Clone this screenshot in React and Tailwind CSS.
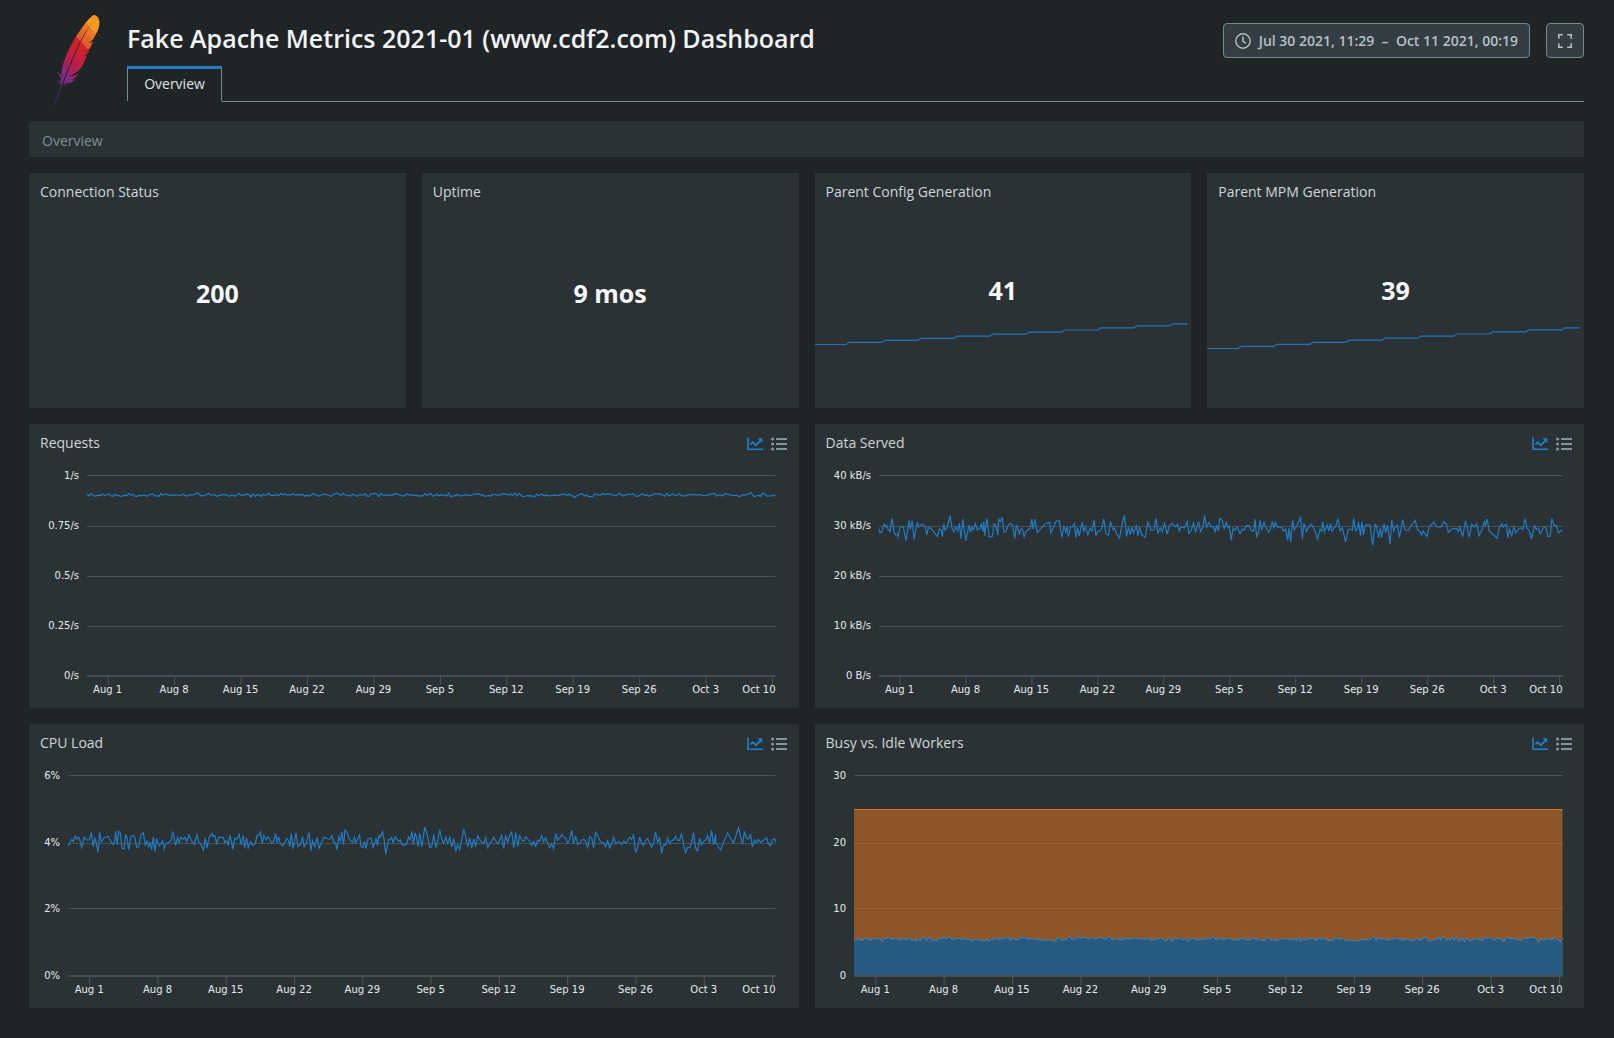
import React from "react";
import { SiApache } from "react-icons/si";

const DATA_SERVED = "12,72 15,83 19,83 28,57 32,66 36,62 40,75 45,80 51,40 57,80 62,90 66,88 69,97 75,66 85,66 93,108 102,47 106,72 112,47 117,103 127,52 131,66 141,57 150,64 155,90 160,68 168,70 187,95 193,72 198,74 202,95 206,58 210,76 217,66 225,32 231,70 236,80 242,66 248,78 253,55 258,101 263,43 272,107 282,60 286,82 290,66 295,75 301,56 307,75 315,70 319,55 323,80 326,50 329,92 335,40 343,97 352,94 357,57 362,60 368,90 371,42 376,50 381,37 387,82 392,80 400,60 407,55 412,60 419,100 424,60 433,86 437,72 442,72 447,96 452,80 465,70 470,42 474,72 480,42 486,83 498,70 510,56 524,52 527,84 534,70 543,48 552,46 560,98 566,62 572,82 576,66 580,95 586,66 592,66 598,56 602,97 607,68 612,93 621,52 626,80 631,65 638,90 645,70 650,78 657,46 662,93 668,78 676,78 680,68 686,42 692,86 700,90 706,50 714,75 718,70 724,86 733,100 740,62 748,30 754,95 760,66 765,90 770,66 775,84 783,62 788,92 793,68 800,90 810,97 818,52 822,60 828,76 836,75 842,40 848,86 855,68 861,80 868,55 876,88 882,62 890,55 900,65 907,58 912,78 918,66 928,68 936,50 941,86 948,76 955,54 961,82 970,50 976,80 983,66 988,32 994,66 1002,52 1007,66 1014,64 1020,80 1024,60 1029,78 1034,40 1041,47 1047,70 1053,52 1058,68 1062,65 1068,106 1073,70 1078,76 1086,66 1094,86 1101,72 1107,76 1113,62 1121,62 1127,76 1135,79 1139,43 1144,95 1149,85 1154,46 1159,76 1166,52 1174,72 1181,82 1186,70 1191,52 1196,68 1200,52 1207,66 1219,68 1225,78 1231,72 1237,106 1241,70 1246,112 1252,46 1257,74 1265,60 1276,38 1281,101 1286,55 1293,80 1299,68 1309,58 1319,78 1327,103 1334,72 1339,78 1342,50 1347,80 1355,60 1361,78 1365,55 1370,80 1377,66 1381,66 1388,40 1394,78 1401,68 1411,111 1419,72 1425,72 1431,76 1435,40 1441,78 1447,70 1450,50 1455,92 1460,50 1464,90 1469,62 1477,58 1484,60 1492,121 1499,58 1503,62 1510,98 1515,70 1519,98 1526,56 1531,84 1536,60 1544,117 1549,46 1555,78 1560,66 1566,60 1572,98 1582,44 1589,75 1599,76 1609,60 1619,46 1627,75 1633,78 1639,90 1643,78 1655,95 1661,66 1675,52 1685,66 1697,66 1705,50 1713,56 1719,82 1729,72 1743,70 1749,80 1753,66 1762,95 1770,48 1775,66 1781,98 1789,58 1797,66 1804,56 1811,92 1819,76 1827,50 1830,60 1835,42 1841,78 1855,90 1865,100 1872,66 1879,56 1882,66 1888,60 1893,58 1897,98 1902,74 1909,92 1915,66 1921,84 1929,72 1937,68 1942,74 1949,40 1955,72 1961,76 1968,102 1977,62 1983,74 1989,70 1994,86 2000,76 2006,66 2012,70 2017,94 2024,94 2029,40 2035,60 2043,62 2049,84 2060,75";

const CPU_LOAD = "144,378 155,358 160,365 166,349 170,358 176,352 180,362 185,382 193,352 200,360 208,360 214,338 220,380 224,355 229,368 234,397 239,335 244,366 252,354 264,349 270,360 279,374 283,370 287,334 292,374 296,334 301,338 306,384 312,387 317,346 321,352 326,390 332,352 340,346 345,354 350,382 356,380 362,346 370,338 376,375 381,363 386,380 390,366 395,390 400,352 405,394 410,356 414,368 418,378 424,370 428,362 433,387 438,372 446,366 454,362 458,335 462,350 467,376 473,352 478,368 483,352 490,358 496,352 500,365 507,344 514,360 523,374 531,344 536,364 542,372 551,390 556,354 561,384 568,352 576,340 580,350 585,346 590,370 596,352 610,352 615,368 620,362 625,374 630,346 635,366 639,388 645,354 650,358 658,343 664,374 670,346 674,384 680,354 685,384 692,365 698,376 706,372 712,345 717,347 722,335 727,372 732,346 739,360 745,350 756,370 762,362 767,340 772,368 776,350 781,370 789,378 800,356 805,360 810,380 814,340 820,386 829,338 834,380 842,374 848,350 853,380 858,372 868,338 873,392 878,362 885,380 892,352 898,385 906,365 912,352 924,357 930,358 936,346 942,366 948,370 951,390 957,350 962,362 966,335 971,374 976,330 982,338 990,360 998,368 1004,352 1008,368 1019,345 1024,380 1030,382 1034,364 1039,386 1044,358 1054,355 1060,382 1066,366 1069,354 1073,376 1078,346 1082,352 1088,335 1093,358 1098,403 1106,358 1110,360 1116,352 1120,368 1127,350 1136,364 1142,360 1148,376 1160,374 1166,352 1171,360 1176,334 1181,374 1186,338 1190,352 1195,380 1200,340";

function scale(points, originX, offsetY) {
  return points.split(" ").map((pair) => {
    const [x, y] = pair.split(",").map(Number);
    return [(x - originX) / 3, y / 3 + offsetY];
  });
}

function noise(seed, from, to, mean, amplitude) {
  let state = seed;
  const random = () => {
    state = (state * 16807) % 2147483647;
    return state / 2147483647;
  };
  const points = [];
  for (let x = from; x <= to; x += 2) {
    points.push([x, mean + (random() + random() + random() - 1.5) * amplitude]);
  }
  points.push([to, mean]);
  return points;
}

const toPath = (points) =>
  "M" + points.map(([x, y]) => `${x.toFixed(1)} ${y.toFixed(1)}`).join("L");

const requests = toPath(noise(71, 0, 689, 20, 1.9));
const dataServed = toPath(scale(DATA_SERVED, 12, 30));
const cpuLoad = toPath([
  ...scale(CPU_LOAD, 144, -55),
  [354, 72],
  [357, 52],
  ...noise(913, 360, 648, 67, 10),
  [653, 75],
  [660, 58],
  [666, 68],
  [671, 53],
  [675, 69],
  ...noise(457, 677, 708, 67, 10),
]);
const busy = toPath(noise(333, 0, 708, 164, 2.6));

const DATES = ["Aug 1", "Aug 8", "Aug 15", "Aug 22", "Aug 29", "Sep 5", "Sep 12", "Sep 19", "Sep 26", "Oct 3"];
const AXIS_TEXT = "fill-[#e6eaeb] font-['DejaVu_Sans',sans-serif] text-[10px]";

function Chart({ label, className, ticks, width, line, area }) {
  return (
    <div className={className}>
      <svg role="img" aria-label={label} className="block h-[233px] w-full overflow-visible">
        {ticks.map(([text, y], i) => (
          <g key={text}>
            <text x="-8" y={Math.round((i * 200) / (ticks.length - 1)) + 4} textAnchor="end" className={AXIS_TEXT}>
              {text}
            </text>
            <rect x="0" y={y} width="100%" height="1" fill="#455354" />
          </g>
        ))}
        {DATES.map((date, i) => (
          <g key={date}>
            <rect x={`${3 + i * 9.65}%`} y="201" width="1" height="9" fill="#4c5a5c" />
            <text x={`${3 + i * 9.65}%`} y="218" textAnchor="middle" className={AXIS_TEXT}>
              {date}
            </text>
          </g>
        ))}
        <rect x="99.5%" y="201" width="1" height="9" fill="#4c5a5c" />
        <text x="100%" y="218" textAnchor="end" className={AXIS_TEXT}>
          Oct 10
        </text>
        {area && (
          <>
            <rect x="0" y="34" width="100%" height="167" fill="#f37720" fillOpacity="0.5" />
            <rect x="0" y="34" width="100%" height="1" fill="#d5752c" />
          </>
        )}
        <svg width="100%" height="201" viewBox={`0 0 ${width} 201`} preserveAspectRatio="none" className="overflow-visible">
          {area && <path d={`${line}V201H0Z`} fill="#265a80" />}
          <path d={line} fill="none" stroke={area ? "#4d7796" : "#237cc3"} strokeWidth="1.2" vectorEffect="non-scaling-stroke" />
        </svg>
        <rect x="0" y="200" width="100%" height="2" fill="#405052" />
      </svg>
    </div>
  );
}

function ChartIcon() {
  return (
    <svg width="16" height="14" viewBox="0 0 16 14" fill="none" aria-hidden="true">
      <path d="M1 0.5V12.2H16" stroke="#2180cc" strokeWidth="1.6" />
      <path d="M3.4 7.4 5.8 5.2 8.8 8.2 13.4 3.6" stroke="#2180cc" strokeWidth="1.7" />
      <path d="M11 1.5H15V5.5Z" fill="#2180cc" stroke="#2180cc" strokeWidth="0.5" />
    </svg>
  );
}

function ListIcon() {
  return (
    <svg width="16" height="14" viewBox="0 0 16 14" fill="#82959a" aria-hidden="true">
      <circle cx="1.6" cy="2" r="1.6" />
      <circle cx="1.6" cy="7" r="1.6" />
      <circle cx="1.6" cy="12" r="1.6" />
      <path d="M5 1H16V3H5ZM5 6H16V8H5ZM5 11H16V13H5Z" />
    </svg>
  );
}

function ChartCard({ title, children }) {
  return (
    <section className="col-span-2 h-[284px] bg-[#2a3235]">
      <div className="flex h-[51px] items-start justify-between pl-[11px] pr-3 pt-[9px]">
        <h2 className="text-[14px] leading-5">{title}</h2>
        <div className="flex gap-2 pt-1">
          <button type="button" aria-label="Show chart" className="block"><ChartIcon /></button>
          <button type="button" aria-label="Show list" className="block"><ListIcon /></button>
        </div>
      </div>
      {children}
    </section>
  );
}

function sparkPath() {
  let d = "M0 22.5";
  for (let i = 0; i < 10; i += 1) {
    const x = 31 + i * 36;
    d += `L${x} ${22.5 - i * 2.07}L${x + 3} ${22.5 - (i + 1) * 2.07}`;
  }
  return `${d}H373`;
}

function StatCard({ title, value, spark }) {
  return (
    <section className="flex h-[235px] flex-col bg-[#2a3235]">
      <h2 className="px-[11px] pt-[9px] text-[14px] leading-5">{title}</h2>
      <div className={spark ? "pt-[70px]" : "pt-[73px]"}>
        <p className="text-center text-[25px] leading-9 font-bold text-[#f8f9fa]">{value}</p>
      </div>
      {spark && (
        <svg viewBox="0 0 377 26" preserveAspectRatio="none" className={spark} aria-hidden="true">
          <path d={sparkPath()} fill="none" stroke="#2374b4" strokeWidth="1.2" vectorEffect="non-scaling-stroke" />
        </svg>
      )}
    </section>
  );
}

function Feather() {
  return (
    <div className="flex w-[98px] shrink-0 justify-center pl-1">
      <svg width="0" height="0" aria-hidden="true">
        <defs>
          <linearGradient id="feather" x1="0.8" y1="0" x2="0.2" y2="1">
            <stop offset="0" stopColor="#f69923" />
            <stop offset="0.14" stopColor="#f79a23" />
            <stop offset="0.15" stopColor="#ea7f27" />
            <stop offset="0.34" stopColor="#e0552a" />
            <stop offset="0.35" stopColor="#d22128" />
            <stop offset="0.48" stopColor="#cb2039" />
            <stop offset="0.7" stopColor="#9e2064" />
            <stop offset="0.72" stopColor="#8b2a80" />
            <stop offset="0.85" stopColor="#6c2a80" />
            <stop offset="1" stopColor="#3a2a78" />
          </linearGradient>
        </defs>
      </svg>
      <SiApache size={90} fill="url(#feather)" aria-label="Apache" className="mt-[15px] shrink-0 [clip-path:inset(0_27%_0_0)]" />
    </div>
  );
}

export default function App() {
  return (
    <div className="min-h-screen bg-[#1f2426] pr-[30px] pb-[30px] pl-[29px] font-['Open_Sans',sans-serif] text-[#cfd6d8]">
      <header className="flex h-[105px]">
        <Feather />
        <div className="flex-1">
          <div className="flex h-[66px] items-start justify-between pt-[22px]">
            <h1 className="text-[25px] leading-8 font-semibold whitespace-nowrap text-[#f3f5f6]">
              Fake Apache Metrics 2021-01 (www.cdf2.com) Dashboard
            </h1>
            <div className="flex gap-4 pt-px">
              <button type="button" className="flex h-[35px] items-center gap-2 rounded-[4px] border border-[#748a90] bg-[#353d44] px-[11px] text-[14px] font-semibold whitespace-pre text-[#b4c0c4]">
                <svg width="16" height="16" viewBox="0 0 16 16" fill="none" stroke="#b4c0c4" aria-hidden="true">
                  <circle cx="8" cy="8" r="7.2" strokeWidth="1.4" />
                  <path d="M8 3.5V8.3L10.8 10.2" strokeWidth="1.5" />
                </svg>
                <span>{"Jul 30 2021, 11:29  –  Oct 11 2021, 00:19"}</span>
              </button>
              <button type="button" aria-label="Full screen" className="flex h-[35px] w-[38px] items-center justify-center rounded-[4px] border border-[#748a90] bg-[#353d44]">
                <svg width="14" height="14" viewBox="0 0 14 14" fill="none" stroke="#b4c0c4" strokeWidth="1.6" aria-hidden="true">
                  <path d="M0.8 4.8V0.8H4.8M9.2 0.8H13.2V4.8M13.2 9.2V13.2H9.2M4.8 13.2H0.8V9.2" />
                </svg>
              </button>
            </div>
          </div>
          <nav className="flex h-9">
            <a href="#overview" className="flex h-[35px] w-[95px] items-center justify-center border-x border-t-[3px] border-x-[#748a90] border-t-[#217cc6] pb-[3px] text-[14px] text-[#dfe4e5]">
              Overview
            </a>
            <div className="flex-1 border-b border-[#748a90]" />
          </nav>
        </div>
      </header>

      <main id="overview" className="mt-4">
        <div className="flex h-9 items-center bg-[#2a3235] px-[13px] pt-[3px] text-[14px] text-[#7f9094]">Overview</div>
        <div className="mt-4 grid grid-cols-4 gap-4">
          <StatCard title="Connection Status" value="200" />
          <StatCard title="Uptime" value="9 mos" />
          <StatCard title="Parent Config Generation" value="41" spark="mt-[14px] h-[26px] w-full" />
          <StatCard title="Parent MPM Generation" value="39" spark="mt-[18px] h-[26px] w-full" />

          <ChartCard title="Requests">
            <Chart
              label="Requests"
              className="ml-[58px] mr-[23px]"
              ticks={[["1/s", 0], ["0.75/s", 51], ["0.5/s", 101], ["0.25/s", 151], ["0/s", 200]]}
              width={689}
              line={requests}
            />
          </ChartCard>
          <ChartCard title="Data Served">
            <Chart
              label="Data Served"
              className="ml-16 mr-[22px]"
              ticks={[["40 kB/s", 0], ["30 kB/s", 51], ["20 kB/s", 101], ["10 kB/s", 151], ["0 B/s", 200]]}
              width={683}
              line={dataServed}
            />
          </ChartCard>
          <ChartCard title="CPU Load">
            <Chart
              label="CPU Load"
              className="ml-[39px] mr-[23px]"
              ticks={[["6%", 0], ["4%", 68], ["2%", 133], ["0%", 200]]}
              width={708}
              line={cpuLoad}
            />
          </ChartCard>
          <ChartCard title="Busy vs. Idle Workers">
            <Chart
              label="Busy vs. Idle Workers"
              className="ml-[39px] mr-[22px]"
              ticks={[["30", 0], ["20", 68], ["10", 133], ["0", 200]]}
              width={708}
              line={busy}
              area
            />
          </ChartCard>
        </div>
      </main>
    </div>
  );
}
